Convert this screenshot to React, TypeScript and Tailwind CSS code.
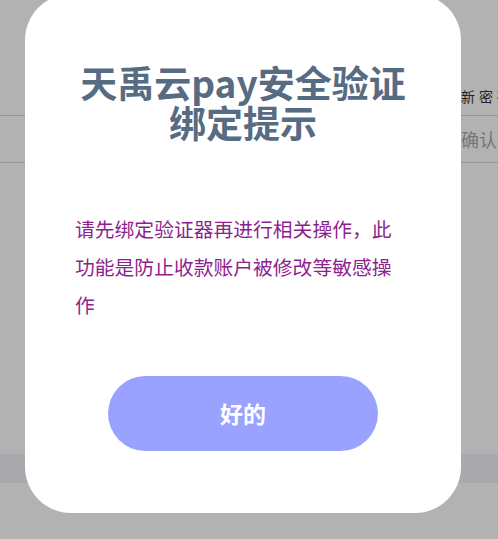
export default function App() {
  return (
    <div
      className="relative h-[539px] w-[498px] overflow-hidden bg-white"
      style={{ fontFamily: '"Noto Sans CJK SC", "Noto Sans", sans-serif' }}
    >
      {/* page behind the dialog */}
      <div className="flex h-full flex-col">
        <div className="h-[78px]" />
        <div className="flex h-[37px] items-center pl-[461px] text-[14px] tracking-[4px] whitespace-nowrap text-[#333]">
          新密码
        </div>
        <div className="h-px bg-[#d6d6d6]" />
        <div className="flex h-[46px] items-center pl-[461px] text-[18px] whitespace-nowrap text-[#aaa]">
          确认
        </div>
        <div className="h-px bg-[#d6d6d6]" />
        <div className="h-[291px]" />
        <div className="h-[29px] bg-[#f2f2f8]" />
      </div>

      {/* overlay */}
      <div className="absolute inset-0 bg-black/30" />

      {/* dialog */}
      <div className="absolute left-[25px] top-[-6px] flex h-[519px] w-[436px] flex-col items-center rounded-[46px] bg-white pt-[68px]">
        <h1 className="text-center text-[37px] font-bold leading-[40px] text-[#576b82]">
          天禹云pay安全验证
          <br />
          绑定提示
        </h1>
        <p className="mt-[68px] w-full px-[50px] text-[19.8px] leading-[38px] text-[#8e1f8e]">
          请先绑定验证器再进行相关操作，此功能是防止收款账户被修改等敏感操作
        </p>
        <button className="mt-[52px] flex h-[75px] w-[270px] items-center justify-center rounded-full bg-[#99a3ff] text-[23px] font-bold text-white">
          好的
        </button>
      </div>
    </div>
  );
}
